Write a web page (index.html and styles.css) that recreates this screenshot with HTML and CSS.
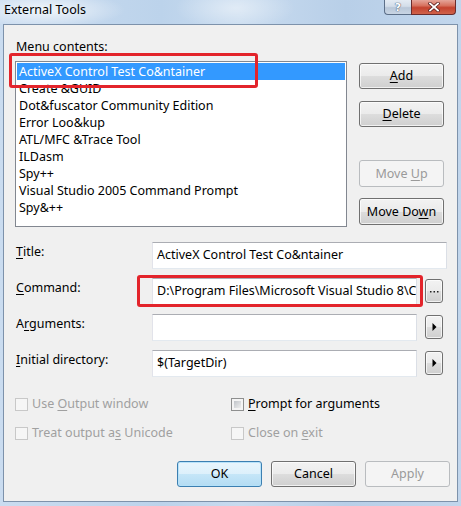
FILE: index.html
```html
<!DOCTYPE html>
<html>
<head>
<meta charset="utf-8">
<title>External Tools</title>
<link rel="stylesheet" href="styles.css">
</head>
<body>
<div class="window">
  <div class="titlebar">
    <span class="title">External Tools</span>
    <div class="caption">
      <div class="cap-btn help"><span class="q">?</span></div>
      <div class="cap-btn close">
        <svg width="12" height="10" viewBox="0 0 12 10">
          <path d="M2 1.5 L10 8.5 M10 1.5 L2 8.5" stroke="#5a2020" stroke-width="3.4" stroke-linecap="square" fill="none"/>
          <path d="M2 1.5 L10 8.5 M10 1.5 L2 8.5" stroke="#ffffff" stroke-width="1.8" stroke-linecap="square" fill="none"/>
        </svg>
      </div>
    </div>
  </div>
  <div class="client">
    <div class="top">
      <div class="list-col">
        <div class="mc-label">Menu contents:</div>
        <div class="listbox">
          <div class="item sel">ActiveX Control Test Co&amp;ntainer</div>
          <div class="item">Create &amp;GUID</div>
          <div class="item">Dot&amp;fuscator Community Edition</div>
          <div class="item">Error Loo&amp;kup</div>
          <div class="item">ATL/MFC &amp;Trace Tool</div>
          <div class="item">ILDasm</div>
          <div class="item">Spy++</div>
          <div class="item">Visual Studio 2005 Command Prompt</div>
          <div class="item">Spy&amp;++</div>
        </div>
      </div>
      <div class="btn-col">
        <div class="btn"><span><u>A</u>dd</span></div>
        <div class="btn gap-s"><span><u>D</u>elete</span></div>
        <div class="btn gap-l tall disabled"><span>Move <u>U</u>p</span></div>
        <div class="btn gap-m tall"><span>Move Do<u>w</u>n</span></div>
      </div>
    </div>

    <div class="fields">
      <div class="flabel"><u>T</u>itle:</div>
      <div class="ctl"><div class="input wide">ActiveX Control Test Co&amp;ntainer</div></div>

      <div class="flabel"><u>C</u>ommand:</div>
      <div class="ctl">
        <div class="input narrow">D:\Program Files\Microsoft Visual Studio 8\Common7\Tools\vsvars32.bat</div>
        <div class="btn sbtn">
          <svg width="9" height="3" viewBox="0 0 9 3"><rect x="0" y="1" width="1.5" height="1.5" fill="#222"/><rect x="3.5" y="1" width="1.5" height="1.5" fill="#222"/><rect x="7" y="1" width="1.5" height="1.5" fill="#222"/></svg>
        </div>
      </div>

      <div class="flabel">A<u>r</u>guments:</div>
      <div class="ctl">
        <div class="input narrow"></div>
        <div class="btn sbtn">
          <svg width="5" height="8" viewBox="0 0 5 8"><path d="M0.5 0 L4.5 4 L0.5 8 Z" fill="#000"/></svg>
        </div>
      </div>

      <div class="flabel"><u>I</u>nitial directory:</div>
      <div class="ctl">
        <div class="input narrow">$(TargetDir)</div>
        <div class="btn sbtn">
          <svg width="5" height="8" viewBox="0 0 5 8"><path d="M0.5 0 L4.5 4 L0.5 8 Z" fill="#000"/></svg>
        </div>
      </div>
    </div>

    <div class="checks">
      <div class="chk disabled"><span class="box"></span><span>Use <u>O</u>utput window</span></div>
      <div class="chk"><span class="box on"></span><span><u>P</u>rompt for arguments</span></div>
      <div class="chk disabled"><span class="box"></span><span>Treat output a<u>s</u> Unicode</span></div>
      <div class="chk disabled"><span class="box"></span><span>Close on <u>e</u>xit</span></div>
    </div>

    <div class="footer">
      <div class="btn default"><span>OK</span></div>
      <div class="btn"><span>Cancel</span></div>
      <div class="btn disabled"><span>Apply</span></div>
    </div>
  </div>

  <div class="annot a1"></div>
  <div class="annot a2"></div>
</div>
</body>
</html>
```

FILE: styles.css
```css
html, body {
  margin: 0;
  padding: 0;
  background: #f0f0f0;
}

body {
  font-family: "Noto Sans", "Segoe UI", "DejaVu Sans", sans-serif;
  font-size: 12.5px;
  color: #000;
}

u {
  text-decoration: underline;
  text-decoration-thickness: 1px;
  text-underline-offset: 2px;
}

.window {
  position: relative;
  width: 461px;
  height: 506px;
  box-sizing: border-box;
  display: flex;
  flex-direction: column;
  background:
    radial-gradient(ellipse 80px 18px at 45px 10px, rgba(255,255,255,0.75), rgba(255,255,255,0) 100%),
    radial-gradient(ellipse 60px 22px at 235px 8px, rgba(255,255,255,0.45), rgba(255,255,255,0) 100%),
    linear-gradient(90deg, #cadcf0 0%, #bcd3eb 35%, #c8dbef 52%, #b8cfe8 75%, #c2d6ec 100%);
}

.titlebar {
  height: 24px;
  display: flex;
  align-items: flex-start;
  padding: 0 5px 0 4px;
  flex: none;
}

.title {
  line-height: 20px;
  font-size: 12.5px;
  color: #000;
}

.caption {
  margin-left: auto;
  display: flex;
}

.cap-btn {
  height: 15px;
  box-sizing: border-box;
  border: 1px solid #5c6f88;
  border-top: none;
  display: flex;
  align-items: center;
  justify-content: center;
}

.help {
  width: 27px;
  border-right: none;
  border-radius: 0 0 0 4px;
  background: linear-gradient(#e4ebf3 0%, #d3dde9 45%, #b9c7d8 55%, #c8d5e4 100%);
}

.help .q {
  font-family: "DejaVu Sans", sans-serif;
  font-weight: bold;
  font-size: 11px;
  line-height: 11px;
  color: #fff;
  text-shadow: 0 0 1px #5b6a80, 0 0 1px #5b6a80, 0 0 1px #5b6a80;
}

.close {
  width: 45px;
  border-color: #6a2c2c;
  border-radius: 0 0 4px 0;
  background: linear-gradient(#e5a59a 0%, #d7725f 40%, #c4432f 55%, #d0624a 100%);
}

.client {
  flex: 1;
  margin: 0 3px 4px 3px;
  border: 1px solid #7d92ab;
  background: #f0f0f0;
  display: flex;
  flex-direction: column;
}

/* top: list + buttons */
.top {
  display: flex;
  padding: 14px 0 0 11px;
}

.list-col {
  width: 332px;
}

.mc-label {
  height: 16px;
  line-height: 16px;
  padding-left: 1px;
}

.listbox {
  margin-top: 6px;
  height: 166px;
  box-sizing: border-box;
  border: 1px solid #828790;
  background: #fff;
  padding: 1px;
}

.item {
  height: 17px;
  line-height: 17px;
  padding-left: 2px;
  white-space: nowrap;
}

.item.sel {
  background: #3399ff;
  color: #fff;
}

.btn-col {
  margin-left: 12px;
  padding-top: 24px;
  width: 85px;
  display: flex;
  flex-direction: column;
}

.btn {
  height: 26px;
  box-sizing: border-box;
  border: 1px solid #707070;
  border-radius: 3px;
  background: linear-gradient(#f2f2f2 0%, #ebebeb 50%, #dddddd 50%, #cfcfcf 100%);
  box-shadow: inset 0 0 0 1px rgba(255,255,255,0.7);
  display: flex;
  align-items: center;
  justify-content: center;
  line-height: 16px;
  white-space: nowrap;
}

.btn.gap-s { margin-top: 12px; }
.btn.gap-l { margin-top: 33px; }
.btn.gap-m { margin-top: 11px; }
.btn.tall { height: 27px; }

.btn.disabled {
  border-color: #b9bcbf;
  background: #f4f4f4;
  box-shadow: none;
  color: #9a9a9a;
}

.btn.default {
  border-color: #3c7fb1;
  background: linear-gradient(#e9f5fc 0%, #dcf0fb 50%, #c5e6f8 50%, #b4dcf3 100%);
  box-shadow: inset 0 0 0 1px rgba(180,225,250,0.9);
}

/* fields */
.fields {
  margin-top: 15px;
  padding-left: 12px;
  display: grid;
  grid-template-columns: 136px 1fr;
  row-gap: 9px;
}

.flabel {
  line-height: 20px;
  align-self: start;
}

.ctl {
  display: flex;
  align-items: flex-start;
  height: 27px;
}

.input {
  height: 27px;
  box-sizing: border-box;
  border: 1px solid;
  border-color: #abadb3 #dbdfe6 #e3e9ef #e2e3ea;
  background: #fff;
  padding-left: 4px;
  line-height: 23px;
  overflow: hidden;
  white-space: nowrap;
}

.input.wide { width: 295px; }
.input.narrow { width: 265px; }

.btn.sbtn {
  width: 18px;
  height: 24px;
  margin-left: 8px;
  margin-top: 1px;
}

.btn.sbtn svg { display: block; }

/* checks */
.checks {
  margin-top: 19px;
  padding-left: 11px;
  display: grid;
  grid-template-columns: 216px 1fr;
  row-gap: 13px;
}

.chk {
  display: flex;
  align-items: center;
  gap: 4px;
  height: 16px;
  line-height: 16px;
  white-space: nowrap;
}

.chk.disabled { color: #a0a0a0; }

.box {
  width: 13px;
  height: 13px;
  box-sizing: border-box;
  border: 1px solid #c8c8c8;
  background: #f6f6f6;
  flex: none;
}

.box.on {
  border-color: #8e8f8f;
  padding: 2px;
  background: linear-gradient(135deg, #c0c4c9 0%, #eeeeee 100%) content-box, #f4f4f4;
}

/* footer */
.footer {
  margin-top: 20px;
  display: flex;
  justify-content: flex-end;
  gap: 9px;
  padding-right: 7px;
}

.footer .btn { width: 85px; }

/* red annotation boxes */
.annot {
  position: absolute;
  box-sizing: border-box;
  border: 3px solid #e3242b;
  border-radius: 3px;
}

.a1 { left: 9px; top: 53px; width: 249px; height: 35px; }
.a2 { left: 137px; top: 275px; width: 286px; height: 32px; }
```
